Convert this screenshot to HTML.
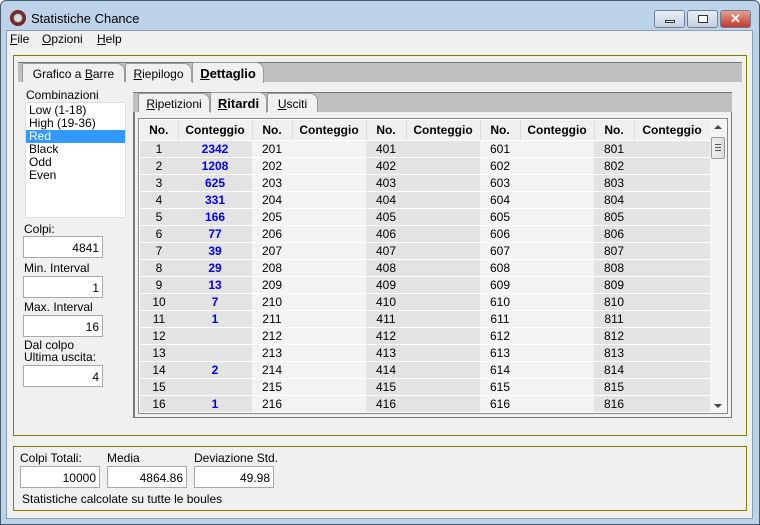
<!DOCTYPE html><html><head><meta charset="utf-8"><style>
*{box-sizing:border-box;margin:0;padding:0}
body{width:760px;height:525px;overflow:hidden;font-family:"Liberation Sans",sans-serif;font-size:11px;color:#000;background:#fff}
.a{position:absolute}
#win{left:0;top:0;width:760px;height:525px;background:#bcd3ea;border:1px solid #4a5d70;border-radius:6px 6px 0 0}
#client{left:6px;top:30px;width:747px;height:489px;background:#f0f0f0;border:1px solid #8aa0b6}
.btn{top:9px;height:18px;border:1px solid #6f7f90;border-radius:3px;background:linear-gradient(#e8eef6,#c4d2e2)}
.gb{border:1px solid #808000}
.tab{height:19px;border:1px solid #999;border-bottom:none;background:#f0f0f0;font-size:12px;padding:3px 0 0 0;text-align:center;border-radius:2px 8px 0 0}
.tb{background:#fff;border:1px solid #a9a9a9;text-align:right;padding:4px 3px 0 0;font-size:12px;height:22px}
.lbl{font-size:12px}
table{border-collapse:collapse;table-layout:fixed;font-size:12px}
td{height:17px;text-align:center;border-bottom:1px solid #fff;padding:0}
th{height:20px;font-weight:bold;font-size:12px;border-right:1px solid #ddd;border-bottom:1px solid #fff}
.g{background:#e3e3e3}.w{background:#f3f3f3}
.b{color:#0000ee;font-weight:bold}
u{text-decoration:underline}
</style></head><body>
<div id="win" class="a">
<div class="a" style="left:9px;top:9px;width:16px;height:16px;border-radius:50%;background:radial-gradient(#ddd 30%,#333 45%,#a22 60%,#400 75%)"></div>
<div class="a" style="left:30px;top:10px;font-size:13px">Statistiche Chance</div>
<div class="a btn" style="left:653px;width:31px"><div class="a" style="left:10px;top:9px;width:10px;height:3px;background:#fff;border:1px solid #333"></div></div>
<div class="a btn" style="left:686px;width:31px"><div class="a" style="left:10px;top:4px;width:10px;height:8px;border:1px solid #333;background:#fff"></div></div>
<div class="a btn" style="left:719px;width:31px;background:linear-gradient(#e8a090,#c0392b);color:#fff;font-weight:bold;text-align:center;font-size:13px;line-height:16px">✕</div>
</div>
<div id="client" class="a"></div>
<div class="a" style="left:10px;top:32px;font-size:12px"><u>F</u>ile</div>
<div class="a" style="left:42px;top:32px;font-size:12px"><u>O</u>pzioni</div>
<div class="a" style="left:97px;top:32px;font-size:12px"><u>H</u>elp</div>

<div class="a gb" style="left:13px;top:55px;width:734px;height:381px"></div>
<div class="a" style="left:18px;top:62px;width:724px;height:20px;background:#c0c0c0;border-top:1px solid #777"></div>
<div class="a tab" style="left:22px;top:63px;width:103px">Grafico a <u>B</u>arre</div>
<div class="a tab" style="left:125px;top:63px;width:67px"><u>R</u>iepilogo</div>
<div class="a tab" style="left:192px;top:62px;width:72px;height:21px;font-weight:bold;font-size:13px"><u>D</u>ettaglio</div>

<div class="a lbl" style="left:26px;top:88px">Combinazioni</div>
<div class="a" style="left:25px;top:102px;width:101px;height:116px;background:#fff;border:1px solid #ddd;font-size:12px;line-height:13px;padding-top:1px">
<div style="padding-left:3px">Low (1-18)</div><div style="padding-left:3px">High (19-36)</div>
<div style="padding-left:3px;background:#3399ff;color:#fff">Red</div>
<div style="padding-left:3px">Black</div><div style="padding-left:3px">Odd</div><div style="padding-left:3px">Even</div></div>
<div class="a lbl" style="left:24px;top:222px">Colpi:</div>
<div class="a tb" style="left:23px;top:236px;width:80px">4841</div>
<div class="a lbl" style="left:24px;top:261px">Min. Interval</div>
<div class="a tb" style="left:23px;top:276px;width:80px">1</div>
<div class="a lbl" style="left:24px;top:300px">Max. Interval</div>
<div class="a tb" style="left:23px;top:315px;width:80px">16</div>
<div class="a lbl" style="left:24px;top:339px;line-height:12px">Dal colpo<br>Ultima uscita:</div>
<div class="a tb" style="left:23px;top:365px;width:80px">4</div>

<div class="a" style="left:133px;top:92px;width:599px;height:326px;border:1px solid #777;border-top:none;border-left:2px solid #777"></div>
<div class="a" style="left:133px;top:92px;width:599px;height:20px;background:#c0c0c0;border-top:1px solid #777"></div>
<div class="a tab" style="left:138px;top:93px;width:72px"><u>R</u>ipetizioni</div>
<div class="a tab" style="left:210px;top:92px;width:57px;height:21px;font-weight:bold;font-size:13px"><u>R</u>itardi</div>
<div class="a tab" style="left:267px;top:93px;width:51px"><u>U</u>sciti</div>

<div class="a" style="left:138px;top:118px;width:590px;height:296px;border:1px solid #888;background:#fff;overflow:hidden">
<table style="width:570px;position:absolute;left:1px;top:1px">
<colgroup><col style="width:38px"><col style="width:74px"><col style="width:40px"><col style="width:74px"><col style="width:40px"><col style="width:74px"><col style="width:40px"><col style="width:74px"><col style="width:40px"><col style="width:76px"></colgroup>
<tr style="background:#f0f0f0"><th>No.</th><th>Conteggio</th><th>No.</th><th>Conteggio</th><th>No.</th><th>Conteggio</th><th>No.</th><th>Conteggio</th><th>No.</th><th>Conteggio</th></tr>
<tr><td class="g">1</td><td class="g b">2342</td><td class="w">201</td><td class="w"></td><td class="g">401</td><td class="g"></td><td class="w">601</td><td class="w"></td><td class="g">801</td><td class="g"></td></tr>
<tr><td class="g">2</td><td class="g b">1208</td><td class="w">202</td><td class="w"></td><td class="g">402</td><td class="g"></td><td class="w">602</td><td class="w"></td><td class="g">802</td><td class="g"></td></tr>
<tr><td class="g">3</td><td class="g b">625</td><td class="w">203</td><td class="w"></td><td class="g">403</td><td class="g"></td><td class="w">603</td><td class="w"></td><td class="g">803</td><td class="g"></td></tr>
<tr><td class="g">4</td><td class="g b">331</td><td class="w">204</td><td class="w"></td><td class="g">404</td><td class="g"></td><td class="w">604</td><td class="w"></td><td class="g">804</td><td class="g"></td></tr>
<tr><td class="g">5</td><td class="g b">166</td><td class="w">205</td><td class="w"></td><td class="g">405</td><td class="g"></td><td class="w">605</td><td class="w"></td><td class="g">805</td><td class="g"></td></tr>
<tr><td class="g">6</td><td class="g b">77</td><td class="w">206</td><td class="w"></td><td class="g">406</td><td class="g"></td><td class="w">606</td><td class="w"></td><td class="g">806</td><td class="g"></td></tr>
<tr><td class="g">7</td><td class="g b">39</td><td class="w">207</td><td class="w"></td><td class="g">407</td><td class="g"></td><td class="w">607</td><td class="w"></td><td class="g">807</td><td class="g"></td></tr>
<tr><td class="g">8</td><td class="g b">29</td><td class="w">208</td><td class="w"></td><td class="g">408</td><td class="g"></td><td class="w">608</td><td class="w"></td><td class="g">808</td><td class="g"></td></tr>
<tr><td class="g">9</td><td class="g b">13</td><td class="w">209</td><td class="w"></td><td class="g">409</td><td class="g"></td><td class="w">609</td><td class="w"></td><td class="g">809</td><td class="g"></td></tr>
<tr><td class="g">10</td><td class="g b">7</td><td class="w">210</td><td class="w"></td><td class="g">410</td><td class="g"></td><td class="w">610</td><td class="w"></td><td class="g">810</td><td class="g"></td></tr>
<tr><td class="g">11</td><td class="g b">1</td><td class="w">211</td><td class="w"></td><td class="g">411</td><td class="g"></td><td class="w">611</td><td class="w"></td><td class="g">811</td><td class="g"></td></tr>
<tr><td class="g">12</td><td class="g b"></td><td class="w">212</td><td class="w"></td><td class="g">412</td><td class="g"></td><td class="w">612</td><td class="w"></td><td class="g">812</td><td class="g"></td></tr>
<tr><td class="g">13</td><td class="g b"></td><td class="w">213</td><td class="w"></td><td class="g">413</td><td class="g"></td><td class="w">613</td><td class="w"></td><td class="g">813</td><td class="g"></td></tr>
<tr><td class="g">14</td><td class="g b">2</td><td class="w">214</td><td class="w"></td><td class="g">414</td><td class="g"></td><td class="w">614</td><td class="w"></td><td class="g">814</td><td class="g"></td></tr>
<tr><td class="g">15</td><td class="g b"></td><td class="w">215</td><td class="w"></td><td class="g">415</td><td class="g"></td><td class="w">615</td><td class="w"></td><td class="g">815</td><td class="g"></td></tr>
<tr><td class="g">16</td><td class="g b">1</td><td class="w">216</td><td class="w"></td><td class="g">416</td><td class="g"></td><td class="w">616</td><td class="w"></td><td class="g">816</td><td class="g"></td></tr>
</table>
<div class="a" style="left:571px;top:1px;width:17px;height:293px;background:#f4f4f4">
<div class="a" style="left:4px;top:5px;width:0;height:0;border-left:4px solid transparent;border-right:4px solid transparent;border-bottom:4px solid #444"></div>
<div class="a" style="left:1px;top:17px;width:14px;height:22px;border:1px solid #999;border-radius:2px;background:linear-gradient(90deg,#eee,#ddd)"><div class="a" style="left:3px;top:6px;width:6px;height:7px;border-top:1px solid #555;border-bottom:1px solid #555"></div><div class="a" style="left:3px;top:9px;width:6px;height:1px;background:#555"></div></div>
<div class="a" style="left:4px;top:284px;width:0;height:0;border-left:4px solid transparent;border-right:4px solid transparent;border-top:4px solid #444"></div>
</div>
</div>

<div class="a gb" style="left:13px;top:446px;width:734px;height:65px"></div>
<div class="a lbl" style="left:20px;top:451px">Colpi Totali:</div>
<div class="a lbl" style="left:107px;top:451px">Media</div>
<div class="a lbl" style="left:194px;top:451px">Deviazione Std.</div>
<div class="a tb" style="left:20px;top:466px;width:80px">10000</div>
<div class="a tb" style="left:107px;top:466px;width:80px">4864.86</div>
<div class="a tb" style="left:194px;top:466px;width:80px">49.98</div>
<div class="a lbl" style="left:22px;top:492px">Statistiche calcolate su tutte le boules</div>
</body></html>
